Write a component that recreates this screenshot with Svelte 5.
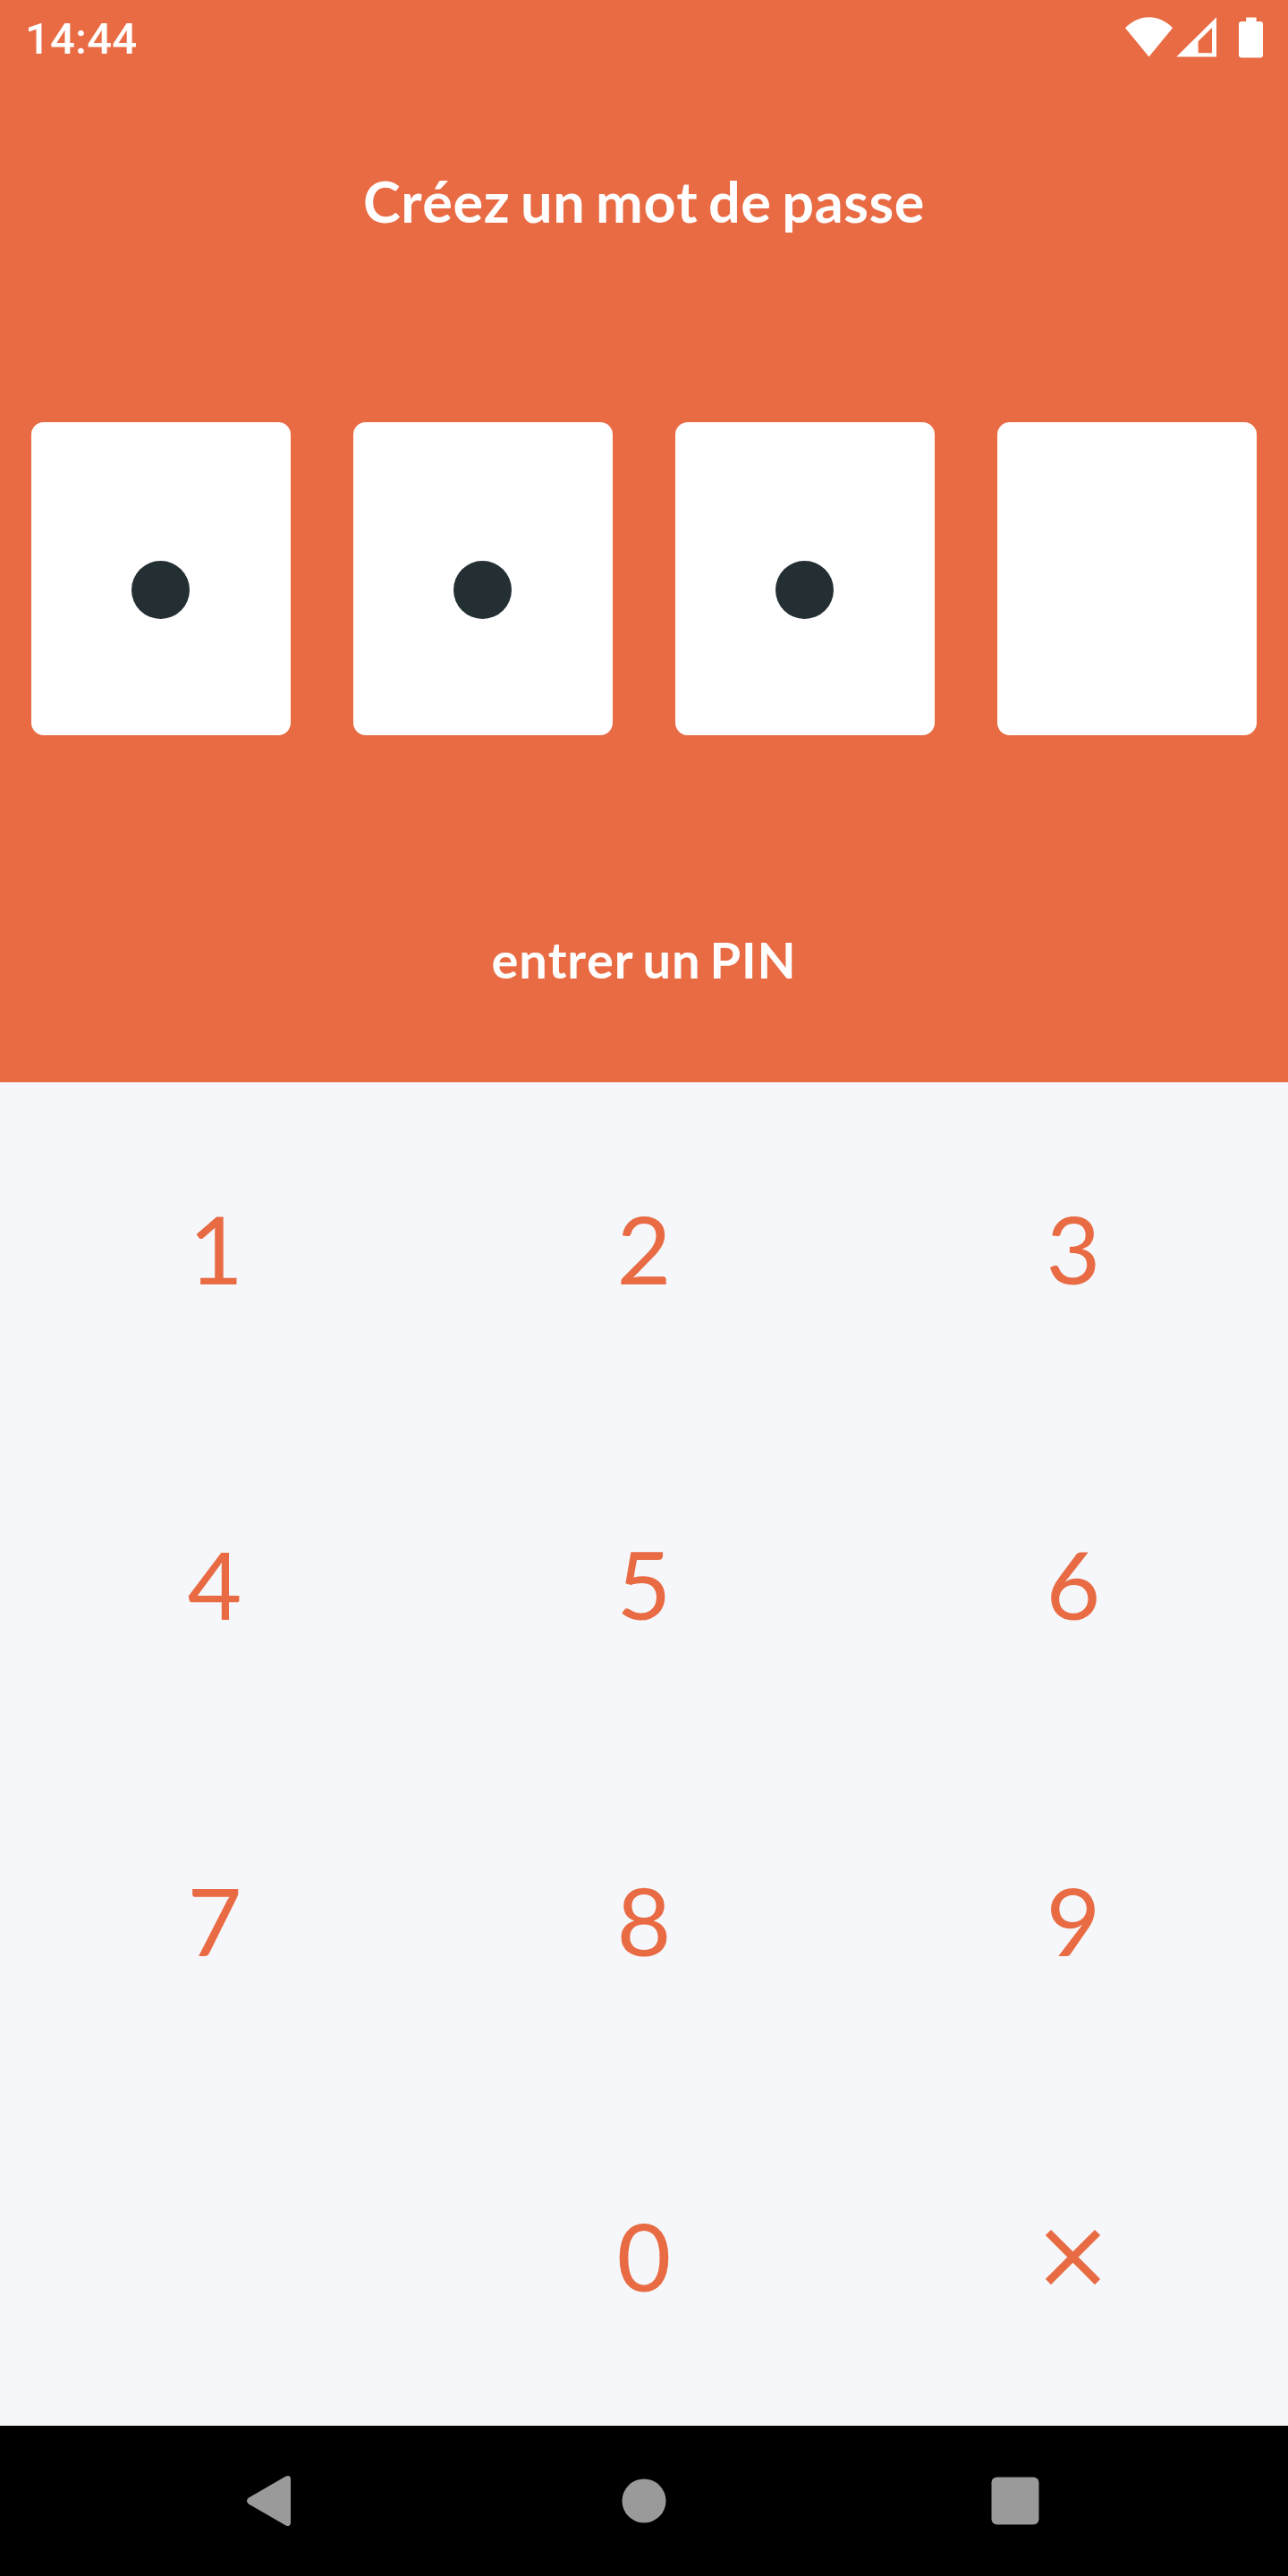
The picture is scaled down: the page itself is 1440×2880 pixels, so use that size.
<script>
  const slots = [true, true, true, false];
  const keys = ['1', '2', '3', '4', '5', '6', '7', '8', '9', '', '0', 'close'];
</script>

<div class="screen">
  <header class="status">
    <span class="clock">14:44</span>
    <svg class="indicators" width="154" height="46" viewBox="0 0 154 46" aria-hidden="true">
      <path d="M0 12.2C7 5 16.500 0.300 26.500 0.300S46 5 53 12.200L26.500 44.500Z" />
      <path fill-rule="evenodd" d="M57.300 44.500L102 0.300V44.500ZM81.600 40.200H97V12L81.600 27.200Z" />
      <path d="M135.200 0.500H146.600V5H151Q154 5 154 8V42.500Q154 45.500 151 45.500H130Q127 45.500 127 42.500V8Q127 5 130 5H135.200Z" />
    </svg>
  </header>

  <main>
    <section class="entry">
      <h1>Créez un mot de passe</h1>
      <div class="slots">
        {#each slots as filled}
          <div class="slot">
            {#if filled}<span class="dot"></span>{/if}
          </div>
        {/each}
      </div>
      <p>entrer un PIN</p>
    </section>

    <section class="keypad">
      {#each keys as key}
        {#if key === 'close'}
          <button class="key" aria-label="Effacer">
            <svg width="105" height="105" viewBox="0 0 24 24">
              <path d="M19 6.41L17.59 5 12 10.59 6.41 5 5 6.41 10.59 12 5 17.59 6.41 19 12 13.41 17.59 19 19 17.59 13.41 12z" />
            </svg>
          </button>
        {:else if key}
          <button class="key" class:narrow={key === '1'}><span>{key}</span></button>
        {:else}
          <div></div>
        {/if}
      {/each}
    </section>
  </main>

  <nav>
    <svg width="70" height="70" viewBox="0 0 70 70" aria-hidden="true">
      <path d="M8 31.500L49.500 7.600Q55 5.500 55 11V59Q55 64.500 49.500 62.400L8 38.500Q4 35 8 31.500Z" />
    </svg>
    <svg width="70" height="70" viewBox="0 0 70 70" aria-hidden="true">
      <circle cx="35" cy="35" r="24.500" />
    </svg>
    <svg width="70" height="70" viewBox="0 0 70 70" aria-hidden="true">
      <rect x="8.500" y="8.500" width="53" height="53" rx="6" />
    </svg>
  </nav>
</div>

<style>
  :global(body) {
    margin: 0;
  }
  .screen {
    width: 1440px;
    height: 2880px;
    display: flex;
    flex-direction: column;
    background: #e86b44;
    font-family: Lato, sans-serif;
    color: #fff;
    overflow: hidden;
  }
  .status {
    height: 84px;
    box-sizing: border-box;
    padding: 0 28px;
    display: flex;
    justify-content: space-between;
    align-items: center;
  }
  .clock {
    font: 500 49px/58px Roboto, sans-serif;
    letter-spacing: 0.2px;
    padding-top: 4px;
  }
  .indicators {
    fill: #fff;
  }
  main {
    flex: 1;
    display: flex;
    flex-direction: column;
  }
  .entry {
    height: 1126px;
    display: flex;
    flex-direction: column;
    align-items: center;
  }
  h1,
  p {
    font-weight: 700;
    font-kerning: none;
    word-spacing: -4.2px;
  }
  h1 {
    margin: 103px 0 0;
    font-size: 63px;
    line-height: 75px;
    letter-spacing: 0.6px;
  }
  .slots {
    width: 100%;
    box-sizing: border-box;
    margin-top: 210px;
    padding: 0 35px;
    display: grid;
    grid-template-columns: repeat(4, 290px);
    justify-content: space-between;
  }
  .slot {
    height: 350px;
    border-radius: 14px;
    background: #fff;
    display: flex;
    justify-content: center;
    align-items: center;
  }
  .dot {
    width: 65px;
    height: 65px;
    margin: 24px 1px 0 0;
    border-radius: 50%;
    background: #242f34;
  }
  p {
    margin: 217px 0 0;
    font-size: 56px;
    line-height: 67px;
    letter-spacing: 0.8px;
  }
  .keypad {
    height: 1502px;
    display: grid;
    grid-template-columns: repeat(3, 1fr);
    grid-template-rows: repeat(4, 1fr);
    background: #f5f7fb;
  }
  .key {
    padding: 0;
    border: 0;
    background: none;
    display: flex;
    justify-content: center;
    align-items: center;
    font: 400 105px/126px Lato, sans-serif;
    color: #e86b44;
  }
  .key span {
    padding-bottom: 6px;
  }
  .narrow span {
    padding-left: 3px;
  }
  .key svg {
    fill: #e86b44;
    margin: 0 1px 1px 0;
  }
  nav {
    height: 168px;
    display: flex;
    justify-content: center;
    align-items: center;
    gap: 345px;
    background: #000;
  }
  nav svg {
    fill: #9a9a9a;
  }
</style>
